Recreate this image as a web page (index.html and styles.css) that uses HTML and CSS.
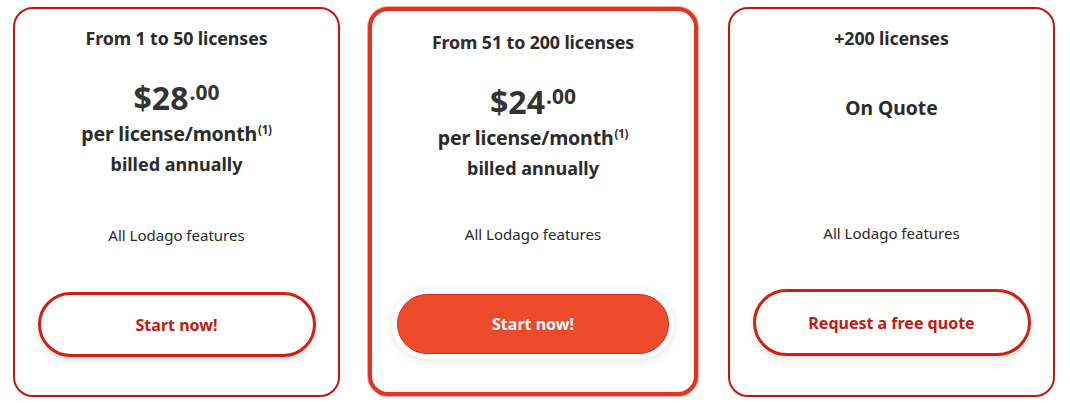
FILE: index.html
```html
<!DOCTYPE html>
<html lang="en">
<head>
<meta charset="utf-8">
<title>Pricing</title>
<link rel="stylesheet" href="styles.css">
</head>
<body>
<div class="plans">
  <section class="card">
    <h3 class="tier">From 1 to 50 licenses</h3>
    <div class="price-area">
      <div class="price">$28<sup class="cents">.00</sup></div>
      <div class="per">per license/month<sup class="note">(1)</sup></div>
      <div class="billed">billed annually</div>
    </div>
    <p class="features">All Lodago features</p>
    <a class="btn btn-outline" href="#">Start now!</a>
  </section>
  <section class="card card-featured">
    <h3 class="tier">From 51 to 200 licenses</h3>
    <div class="price-area">
      <div class="price">$24<sup class="cents">.00</sup></div>
      <div class="per">per license/month<sup class="note">(1)</sup></div>
      <div class="billed">billed annually</div>
    </div>
    <p class="features">All Lodago features</p>
    <a class="btn btn-filled" href="#">Start now!</a>
  </section>
  <section class="card card-quote">
    <h3 class="tier">+200 licenses</h3>
    <div class="price-area">
      <div class="quote">On Quote</div>
    </div>
    <p class="features">All Lodago features</p>
    <a class="btn btn-outline btn-wide" href="#">Request a free quote</a>
  </section>
</div>
</body>
</html>
```

FILE: styles.css
```css
* { box-sizing: border-box; }
html, body { margin: 0; padding: 0; background: #ffffff; }
body {
  font-family: "Noto Sans", "Open Sans", sans-serif;
  color: #2b2b2b;
  width: 1070px;
  height: 403px;
  overflow: hidden;
}
.plans {
  display: flex;
  gap: 30px;
  padding: 7px 0 0 13px;
}
.card {
  width: 327px;
  height: 390px;
  border: 2px solid #c4180e;
  border-radius: 20px;
  display: flex;
  flex-direction: column;
  align-items: center;
  padding-top: 17px;
  background: #fff;
}
.card-featured {
  width: 330px;
  height: 389px;
  margin-left: -2px;
  border: 4px solid #e5321f;
  box-shadow: 0 0 0 1px rgba(200, 30, 15, 0.35);
  padding-top: 19px;
}
.tier {
  margin: 0;
  font-size: 17.8px;
  font-weight: 700;
  line-height: 24px;
  letter-spacing: -0.1px;
}
.price-area {
  height: 129px;
  display: flex;
  flex-direction: column;
  align-items: center;
}
.price {
  margin-top: 28px;
  font-size: 32px;
  font-weight: 700;
  line-height: 40px;
  color: #333;
}
.cents {
  font-size: 21px;
  vertical-align: top;
  position: relative;
  top: -6px;
  margin-left: 1px;
}
.per {
  margin-top: 1px;
  font-size: 19.6px;
  font-weight: 700;
  line-height: 30px;
  letter-spacing: -0.2px;
}
.note {
  font-size: 11.5px;
  vertical-align: top;
  position: relative;
  top: -4px;
  margin-left: 1px;
}
.billed {
  font-size: 18px;
  font-weight: 700;
  line-height: 30px;
}
.quote {
  margin-top: 44px;
  font-size: 19.3px;
  font-weight: 700;
  line-height: 28px;
}
.features {
  margin: 46px 0 0;
  font-size: 15px;
  line-height: 20px;
  color: #2a2a2a;
}
.card-featured .features { margin-top: 41px; }
.card-quote .features { margin-top: 44px; }
.btn {
  margin-top: 47px;
  width: 278px;
  height: 65px;
  border-radius: 34px;
  display: flex;
  align-items: center;
  justify-content: center;
  font-size: 16px;
  font-weight: 700;
  text-decoration: none;
}
.btn-outline {
  border: 3px solid #d1200f;
  color: #c8170c;
  background: #fff;
  box-shadow: 0 3px 6px rgba(0, 0, 0, 0.12);
}
.btn-filled {
  width: 272px;
  height: 60px;
  margin-top: 50px;
  background: #ee4a2c;
  border: 1px solid #cf2c18;
  color: #fff;
  box-shadow: 0 0 0 5px #fff, 0 2px 10px 4px rgba(0, 0, 0, 0.12);
}
.btn-wide {
  margin-top: 46px;
  height: 67px;
}
```
